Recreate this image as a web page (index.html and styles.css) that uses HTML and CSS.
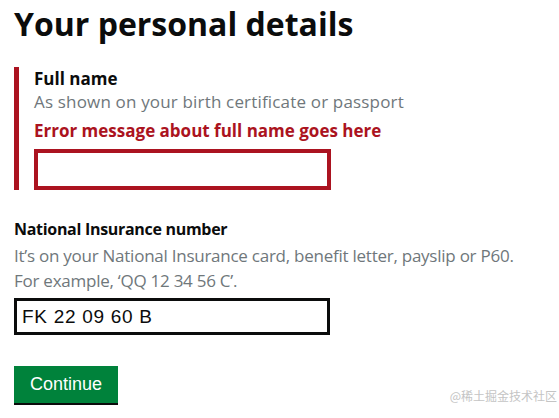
FILE: index.html
```html
<!DOCTYPE html>
<html lang="en">
<head>
<meta charset="utf-8">
<title>Your personal details</title>
<link rel="stylesheet" href="styles.css">
</head>
<body>
<main class="page">
  <h1 class="heading">Your personal details</h1>
  <div class="group group--error">
    <label class="label" for="full-name">Full name</label>
    <div class="hint hint--single">As shown on your birth certificate or passport</div>
    <div class="error">Error message about full name goes here</div>
    <input class="input input--error" id="full-name" type="text">
  </div>
  <div class="group group--ni">
    <label class="label label--ni" for="ni">National Insurance number</label>
    <div class="hint hint--multi">It’s on your National Insurance card, benefit letter, payslip or P60.<br>For example, ‘QQ 12 34 56 C’.</div>
    <input class="input input--ni" id="ni" type="text" value="FK 22 09 60 B">
  </div>
  <button class="button" type="button">Continue</button>
</main>
<div class="watermark">@稀土掘金技术社区</div>
</body>
</html>
```

FILE: styles.css
```css
html, body {
  margin: 0;
  padding: 0;
  background: #ffffff;
}
body {
  font-family: "Open Sans", "Noto Sans", sans-serif;
  color: #0b0c0c;
  position: relative;
  width: 559px;
  height: 418px;
  overflow: hidden;
}
.page {
  padding: 4px 0 0 14px;
  display: flex;
  flex-direction: column;
  align-items: flex-start;
}
.heading {
  margin: 0;
  font-size: 32px;
  line-height: 40px;
  font-weight: 700;
  letter-spacing: 0;
}
.group {
  display: flex;
  flex-direction: column;
  align-items: flex-start;
}
.group--error {
  margin-top: 23px;
  border-left: 5px solid #ab1320;
  padding-left: 15px;
}
.label {
  font-size: 17px;
  line-height: 24px;
  font-weight: 700;
}
.label--ni {
  font-size: 16px;
  letter-spacing: -0.3px;
}
.hint {
  font-size: 17px;
  line-height: 22px;
  color: #6f777b;
}
.hint--single {
  letter-spacing: 0.17px;
}
.error {
  margin-top: 7px;
  font-size: 17px;
  line-height: 22px;
  font-weight: 700;
  color: #ab1320;
}
.input {
  box-sizing: border-box;
  margin: 7px 0 0;
  font-family: "Liberation Sans", Arial, sans-serif;
  font-size: 18px;
  color: #0b0c0c;
  background: #fff;
  outline: none;
}
.input--error {
  width: 297px;
  height: 41px;
  border: 4px solid #ab1320;
}
.group--ni {
  margin-top: 27px;
}
.hint--multi {
  margin-top: 2px;
  line-height: 25px;
  letter-spacing: -0.25px;
}
.input--ni {
  margin-top: 5px;
  width: 316px;
  height: 37px;
  border: 3px solid #0b0c0c;
  padding: 0 5px;
  font-size: 19px;
  letter-spacing: 0.7px;
}
.button {
  margin-top: 31px;
  height: 37px;
  padding: 0 16px;
  border: 0;
  background: #00823b;
  color: #fff;
  font-family: "Liberation Sans", Arial, sans-serif;
  font-size: 18px;
  box-shadow: 0 2px 0 #0b0c0c;
  cursor: pointer;
}
.watermark {
  position: absolute;
  right: 2px;
  top: 388px;
  font-family: "Noto Sans CJK SC", sans-serif;
  font-size: 12px;
  line-height: 16px;
  color: #c4c4c4;
}
```
